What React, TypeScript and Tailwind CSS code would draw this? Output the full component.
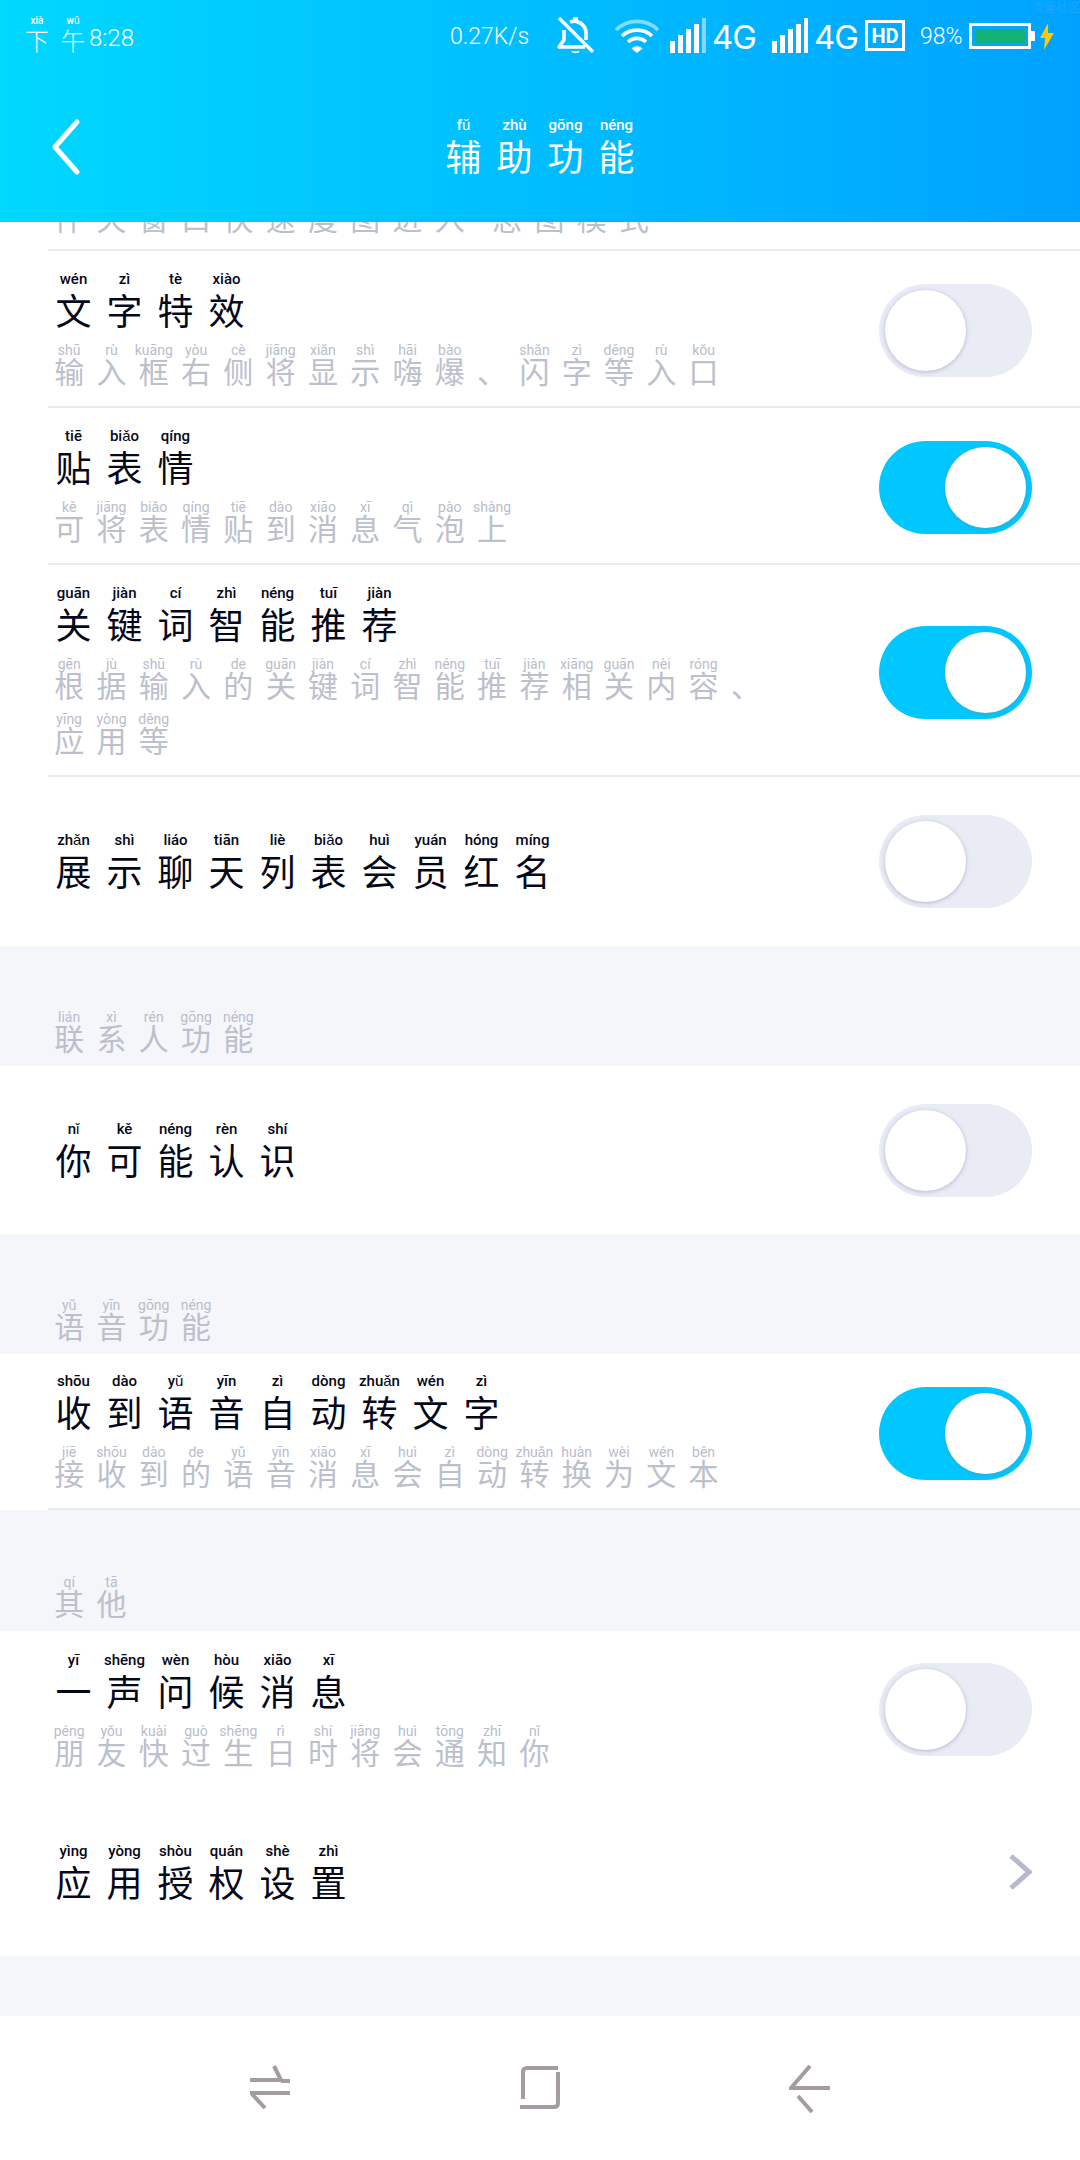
const cjk = "font-['Noto_Sans_CJK_SC','Noto_Sans',sans-serif]";

function Hanzi({ text, py, muted, white }: { text: string; py: string; muted?: boolean; white?: boolean }) {
  const chars = text.split(' ');
  const sounds = py.split(' ');
  return (
    <div className={`flex ${cjk}`}>
      {chars.map((c, i) => (
        <div key={i} className={`flex flex-col items-center ${c === '“' ? 'w-[15px]' : muted ? 'w-[42.3px]' : 'w-[51px]'}`}>
          <span
            className={`font-['Roboto',sans-serif] whitespace-nowrap ${
              muted ? 'h-[11px] text-[14px] leading-[17px] text-[#b9bdcb]' : 'h-[17px] text-[15px] leading-[17px] font-medium'
            } ${white ? 'text-white' : muted ? '' : 'text-[#05081a]'}`}
          >
            {sounds[i] === '-' ? '' : sounds[i]}
          </span>
          <span
            className={
              muted
                ? 'h-[34px] text-[30px] leading-[34px] font-normal text-[#bcc0cd]'
                : `h-[42px] text-[36px] leading-[42px] font-normal ${white ? 'text-white' : 'text-[#05081a]'}`
            }
          >
            {c}
          </span>
        </div>
      ))}
    </div>
  );
}

function Toggle({ on }: { on?: boolean }) {
  return (
    <div
      className={`flex h-[93px] w-[153px] shrink-0 items-center rounded-full px-[6px] ${
        on ? 'justify-end bg-[#00c8ff]' : 'justify-start bg-[#e9ebf5]'
      }`}
    >
      <div className="h-[81px] w-[81px] rounded-full bg-white shadow-[0_1px_4px_rgba(120,125,150,0.45)]" />
    </div>
  );
}

type Line = { text: string; py: string };

function Row({
  title,
  py,
  sub,
  on,
  h,
  divider,
}: {
  title: string;
  py: string;
  sub?: Line[];
  on?: boolean;
  h: string;
  divider?: boolean;
}) {
  return (
    <div className={`bg-white pl-[48px] ${h}`}>
      <div className={`flex h-full items-center justify-between pr-[48px] ${divider ? 'border-b-2 border-[#e8ebf1] pt-[4px]' : ''}`}>
        <div className={`flex flex-col ${divider ? 'mb-[4px]' : ''}`}>
          <Hanzi text={title} py={py} />
          {sub && (
            <div className="mt-[12px] flex flex-col gap-[10px]">
              {sub.map((l, i) => (
                <Hanzi key={i} text={l.text} py={l.py} muted />
              ))}
            </div>
          )}
        </div>
        <Toggle on={on} />
      </div>
    </div>
  );
}

function Section({ text, py, h }: { text: string; py: string; h: string }) {
  return (
    <div className={`flex items-end bg-[#f4f6fa] pb-[12px] pl-[48px] ${h}`}>
      <Hanzi text={text} py={py} muted />
    </div>
  );
}

function Signal({ className, faded }: { className: string; faded?: boolean }) {
  return (
    <div className={`mt-[2px] flex h-[35px] items-end gap-[3px] ${className}`}>
      <div className="h-[12px] w-[5px] bg-white" />
      <div className="h-[18px] w-[5px] bg-white" />
      <div className="h-[24px] w-[5px] bg-white" />
      <div className="h-[29px] w-[5px] bg-white" />
      <div className={`h-[35px] w-[4px] ${faded ? 'bg-white/50' : 'bg-white'}`} />
    </div>
  );
}

function Net() {
  return <span className="mt-[5px] ml-[6px] w-[46px] font-['Inter',sans-serif] text-[33px] leading-[32px] font-normal tracking-[-1px]">4G</span>;
}

function StatusBar() {
  return (
    <div className="flex h-[72px] items-start pt-[16px] text-white">
      <div className="ml-[19px] flex items-start">
        <div className={`flex ${cjk}`}>
          <div className="flex w-[36px] flex-col items-center">
            <span className="h-[10px] font-['Roboto',sans-serif] text-[10px] leading-[10px] font-medium">xià</span>
            <span className="text-[24px] leading-[28px] font-light">下</span>
          </div>
          <div className="flex w-[36px] flex-col items-center">
            <span className="h-[10px] font-['Roboto',sans-serif] text-[10px] leading-[10px] font-medium">wǔ</span>
            <span className="text-[24px] leading-[28px] font-light">午</span>
          </div>
        </div>
        <span className="mt-[8px] ml-[-2px] w-[46px] font-['Roboto',sans-serif] text-[24px] leading-[28px] font-light">8:28</span>
      </div>
      <span className="mt-[7px] ml-[315px] w-[84px] font-['Roboto',sans-serif] text-[23px] leading-[28px] font-light whitespace-nowrap">0.27K/s</span>
      {/* bell off */}
      <svg className="ml-[22px] h-[40px] w-[40px]" viewBox="0 0 40 40" fill="none" stroke="white" strokeWidth="3.6">
        <path d="M3 2 L37 36" />
        <path d="M8 14 V24 L3 31 H29" strokeLinejoin="round" />
        <path d="M14 6 A12 12 0 0 1 30 16 V24" />
        <path d="M15 35 H24 A5 4 0 0 1 15 35 Z" fill="white" stroke="none" />
        <path d="M17 3 H22" />
      </svg>
      {/* wifi */}
      <svg className="mt-[3px] ml-[18px] h-[34px] w-[46px]" viewBox="0 0 46 34" fill="none" stroke="white" strokeWidth="3.6">
        <path d="M2 11 A30 30 0 0 1 44 11" strokeOpacity="0.5" />
        <path d="M8 17 A22 22 0 0 1 38 17" />
        <path d="M14 23 A13 13 0 0 1 32 23" />
        <path d="M17.5 29.5 A8 8 0 0 1 28.5 29.5 L23 34 Z" fill="white" stroke="none" />
      </svg>
      <Signal className="ml-[10px]" faded />
      <Net />
      <Signal className="ml-[14px]" />
      <Net />
      <div className="mt-[4px] ml-[5px] flex h-[31px] w-[40px] items-center justify-center border-[3px] border-white font-['Roboto',sans-serif] text-[20px] leading-none font-bold">HD</div>
      <span className="mt-[7px] ml-[15px] w-[49px] font-['Roboto',sans-serif] text-[23px] leading-[28px] font-light">98%</span>
      <div className="mt-[7px] flex items-center">
        <div className="h-[26px] w-[62px] border-[3px] border-white p-[3px]">
          <div className="h-full w-full bg-[#12b178]" />
        </div>
        <div className="h-[10px] w-[4px] bg-white" />
      </div>
      <svg className="mt-[7px] ml-[5px] h-[27px] w-[14px]" viewBox="0 0 14 27">
        <path d="M8 0 L0 15 H5 L4 27 L14 10 H8 Z" fill="#ffc800" />
      </svg>
    </div>
  );
}

export default function App() {
  return (
    <div className="flex h-[2160px] w-[1080px] flex-col overflow-hidden bg-white">
      <header className="relative h-[222px] shrink-0 bg-gradient-to-r from-[#00d8ff] to-[#00a2ff]">
        <StatusBar />
        <span className={`absolute top-0 right-0 text-[12px] leading-[14px] text-[#1ea6ff] ${cjk}`}>流量社区</span>
        <div className="relative flex h-[150px] items-start justify-center pt-[45px]">
          <svg className="absolute top-[46px] left-[48px] h-[58px] w-[36px]" viewBox="0 0 36 58" fill="none" stroke="white" strokeWidth="5" strokeLinecap="round" strokeLinejoin="round">
            <path d="M29 4 L7 29 L29 54" />
          </svg>
          <Hanzi text="辅 助 功 能" py="fǔ zhù gōng néng" white />
        </div>
      </header>

      <div className="ml-[48px] h-[29px] shrink-0 overflow-hidden border-b-2 border-[#e8ebf1]">
        <div className="mt-[-33px]">
          <Hanzi text="件 天 窗 口 快 速 度 图 进 入 “ 思 图 模 式" py="- - - - - - - - - - - - - - -" muted />
        </div>
      </div>

      <Row
        h="h-[157px]"
        divider
        title="文 字 特 效"
        py="wén zì tè xiào"
        sub={[{ text: '输 入 框 右 侧 将 显 示 嗨 爆 、 闪 字 等 入 口', py: 'shū rù kuāng yòu cè jiāng xiǎn shì hāi bào - shǎn zì děng rù kǒu' }]}
      />
      <Row
        h="h-[157px]"
        divider
        on
        title="贴 表 情"
        py="tiē biǎo qíng"
        sub={[{ text: '可 将 表 情 贴 到 消 息 气 泡 上', py: 'kě jiāng biǎo qíng tiē dào xiāo xī qì pào shàng' }]}
      />
      <Row
        h="h-[212px]"
        divider
        on
        title="关 键 词 智 能 推 荐"
        py="guān jiàn cí zhì néng tuī jiàn"
        sub={[
          { text: '根 据 输 入 的 关 键 词 智 能 推 荐 相 关 内 容 、', py: 'gēn jù shū rù de guān jiàn cí zhì néng tuī jiàn xiāng guān nèi róng -' },
          { text: '应 用 等', py: 'yīng yòng děng' },
        ]}
      />
      <Row h="h-[169px]" title="展 示 聊 天 列 表 会 员 红 名" py="zhǎn shì liáo tiān liè biǎo huì yuán hóng míng" />

      <Section h="h-[120px]" text="联 系 人 功 能" py="lián xì rén gōng néng" />
      <Row h="h-[168px]" title="你 可 能 认 识" py="nǐ kě néng rèn shí" />

      <Section h="h-[120px]" text="语 音 功 能" py="yǔ yīn gōng néng" />
      <Row
        h="h-[156px]"
        divider
        on
        title="收 到 语 音 自 动 转 文 字"
        py="shōu dào yǔ yīn zì dòng zhuǎn wén zì"
        sub={[{ text: '接 收 到 的 语 音 消 息 会 自 动 转 换 为 文 本', py: 'jiē shōu dào de yǔ yīn xiāo xī huì zì dòng zhuǎn huàn wèi wén běn' }]}
      />

      <Section h="h-[121px]" text="其 他" py="qí tā" />
      <Row
        h="h-[157px]"
        title="一 声 问 候 消 息"
        py="yī shēng wèn hòu xiāo xī"
        sub={[{ text: '朋 友 快 过 生 日 时 将 会 通 知 你', py: 'péng yǒu kuài guò shēng rì shí jiāng huì tōng zhī nǐ' }]}
      />
      <div className="flex h-[168px] items-center justify-between bg-white pr-[48px] pl-[48px]">
        <Hanzi text="应 用 授 权 设 置" py="yìng yòng shòu quán shè zhì" />
        <svg className="h-[36px] w-[24px]" viewBox="0 0 24 36" fill="none" stroke="#b5bac9" strokeWidth="5">
          <path d="M3 2 L21 18 L3 34" />
        </svg>
      </div>

      <div className="h-[60px] shrink-0 bg-[#f4f6fa]" />

      <nav className="flex h-[144px] items-start bg-white pt-[49px]">
        <svg className="ml-[250px] h-[44px] w-[40px]" viewBox="0 0 40 44" fill="none" stroke="#a59d9d" strokeWidth="4">
          <path d="M24 1 L31 15 H0" />
          <path d="M40 16 H31" />
          <path d="M40 28 H1 L15 43" />
        </svg>
        <svg className="ml-[230px] h-[44px] w-[40px]" viewBox="0 0 40 44" fill="none" stroke="#a59d9d" strokeWidth="4">
          <path d="M3 34 V7 Q3 3 7 3 H38" />
          <path d="M38 7 V38 Q38 42 34 42 H0" />
        </svg>
        <svg className="ml-[229px] h-[48px] w-[41px]" viewBox="0 0 41 48" fill="none" stroke="#a59d9d" strokeWidth="4">
          <path d="M21 1 L2 23 H41" />
          <path d="M9 31 L23 47" />
        </svg>
      </nav>
    </div>
  );
}
